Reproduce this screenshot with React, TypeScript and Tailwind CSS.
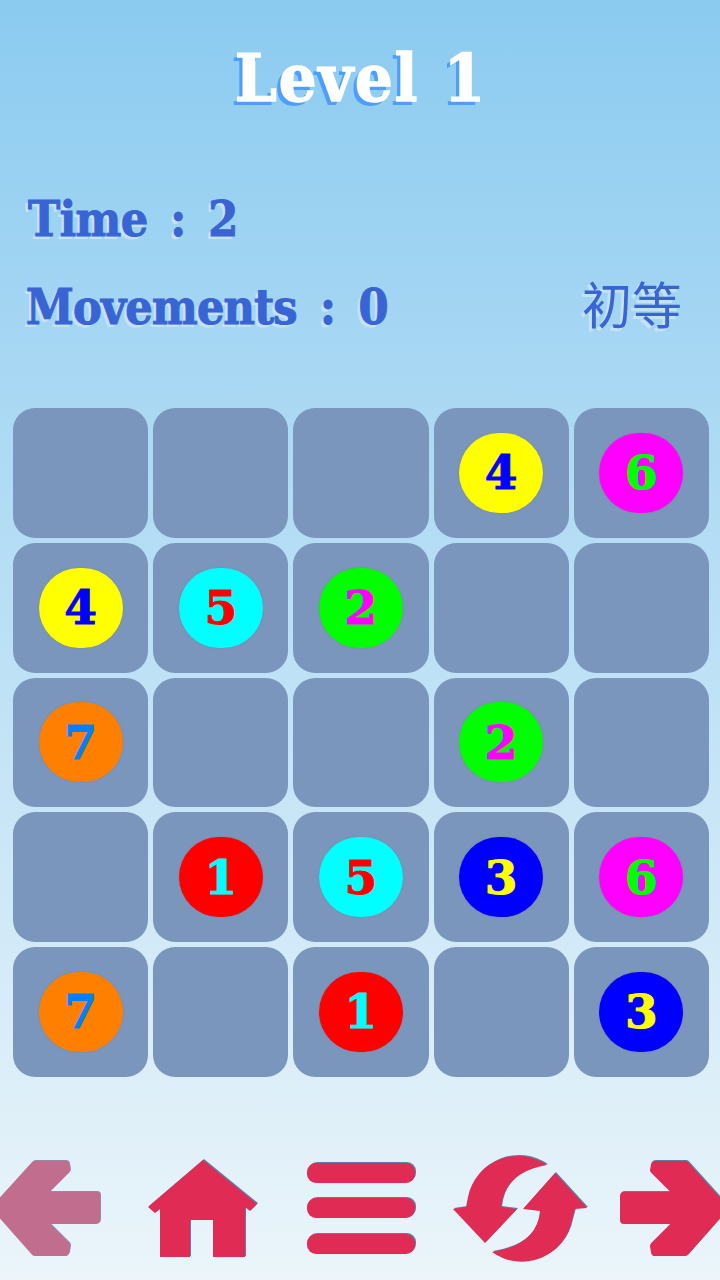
const B: Record<number, { n: number; bg: string; fg: string }> = {
  1: { n: 1, bg: "bg-[#ff0000]", fg: "text-[#00ffff]" },
  2: { n: 2, bg: "bg-[#00ff00]", fg: "text-[#ff00ff]" },
  3: { n: 3, bg: "bg-[#0000ff]", fg: "text-[#ffff00]" },
  4: { n: 4, bg: "bg-[#ffff00]", fg: "text-[#0000ff]" },
  5: { n: 5, bg: "bg-[#00ffff]", fg: "text-[#ff0000]" },
  6: { n: 6, bg: "bg-[#ff00ff]", fg: "text-[#00ff00]" },
  7: { n: 7, bg: "bg-[#ff8000]", fg: "text-[#0080ff]" },
};
const board: number[] = [
  0, 0, 0, 4, 6,
  4, 5, 2, 0, 0,
  7, 0, 0, 2, 0,
  0, 1, 5, 3, 6,
  7, 0, 1, 0, 3,
];

function Cell({ v }: { v: number }) {
  const b = v ? B[v] : null;
  return (
    <div className="flex h-[129.75px] items-center justify-center rounded-[22px] bg-[#7b96bd]">
      {b && (
        <div className={`flex h-[80px] w-[84px] items-center justify-center rounded-full ${b.bg} shadow-[0_0_2px_rgba(120,120,120,0.6)]`}>
          <span className={`font-['DejaVu_Serif'] text-[47px] font-bold leading-none [-webkit-text-stroke:1px_currentColor] ${b.fg}`}>{b.n}</span>
        </div>
      )}
    </div>
  );
}

const shadow = "drop-shadow-[1px_-1px_0_#5b7fa5]";

function Icon({ x, children, cls }: { x: number; children: React.ReactNode; cls?: string }) {
  return (
    <svg viewBox={`${x} 1150 144 120`} className={`h-[120px] w-[144px] overflow-visible ${cls ?? shadow}`}>
      {children}
    </svg>
  );
}

const arrow =
  "M35 1165 L65 1165 L66 1170 L40 1196 L96 1196 L96 1220 L40 1220 L66 1246 L65 1252 L35 1252 L-4 1208 Z";

export default function App() {
  return (
    <div className="flex h-[1280px] w-[720px] flex-col overflow-hidden bg-gradient-to-b from-[#8bcbf0] to-[#ebf5fa]">
      <h1 className="mt-[45px] whitespace-pre pl-[235px] font-['DejaVu_Serif_Condensed'] text-[66px] font-bold leading-none tracking-[2px] text-white [word-spacing:-10.5px] [-webkit-text-stroke:1.5px_#fff] [text-shadow:-4px_4px_0_#4e9eff]">
        {"Level  1"}
      </h1>
      <div className="mt-[84px] whitespace-pre pl-[28px] font-['DejaVu_Serif_Condensed'] text-[48px] font-bold leading-none tracking-[-0.5px] text-[#3864d4] [word-spacing:8px] [-webkit-text-stroke:1px_#3864d4] [text-shadow:-3px_3px_0_#c5e2f5]">
        Time : 2
      </div>
      <div className="mt-[34px] flex items-start justify-between pl-[26px] pr-[38px] text-[#3864d4] [text-shadow:-3px_3px_0_#c5e2f5]">
        <span className="mt-[6px] whitespace-pre font-['DejaVu_Serif_Condensed'] text-[48px] font-bold leading-none tracking-[-0.8px] [word-spacing:9px] [-webkit-text-stroke:1px_#3864d4]">Movements : 0</span>
        <span className="font-['Noto_Sans_CJK_SC',sans-serif] text-[50px] leading-none">初等</span>
      </div>
      <div className="mt-[77px] grid grid-cols-[repeat(5,135.2px)] gap-x-[5px] gap-y-[5px] pl-[13px]">
        {board.map((v, i) => (
          <Cell key={i} v={v} />
        ))}
      </div>
      <div className="mt-[73px] flex">
        <Icon x={0} cls="drop-shadow-[1px_-1px_0_#9a86a8]">
          <path d={arrow} fill="#c06d8e" stroke="#c06d8e" strokeWidth="8" strokeLinejoin="round" />
        </Icon>
        <Icon x={144}>
          <path d="M203 1160 L257 1204 L250 1211 L245 1207 L245 1257 L213 1257 L213 1220 L190 1220 L190 1257 L160 1257 L160 1209 L155 1213 L148 1207 Z" fill="#e02b55" />
        </Icon>
        <Icon x={288}>
          <rect x="307" y="1163" width="108" height="20" rx="9" fill="#e02b55" />
          <rect x="307" y="1198" width="108" height="20" rx="9" fill="#e02b55" />
          <rect x="307" y="1234" width="108" height="20" rx="9" fill="#e02b55" />
        </Icon>
        <Icon x={432}>
          <path d="M547 1165 A51 51 0 0 0 468 1197 L466 1207 L453 1209 L485 1243 L517 1209 L501 1207 Q505 1172 547 1165 Z" fill="#e02b55" />
          <path d="M492 1252 A51 51 0 0 0 572 1220 L575 1209 L587 1208 L555 1173 L523 1209 L540 1211 Q537 1245 492 1252 Z" fill="#e02b55" />
        </Icon>
        <Icon x={576}>
          <g transform="translate(720 0) scale(-1 1)">
            <path d={arrow} fill="#e02b55" stroke="#e02b55" strokeWidth="8" strokeLinejoin="round" />
          </g>
        </Icon>
      </div>
    </div>
  );
}
